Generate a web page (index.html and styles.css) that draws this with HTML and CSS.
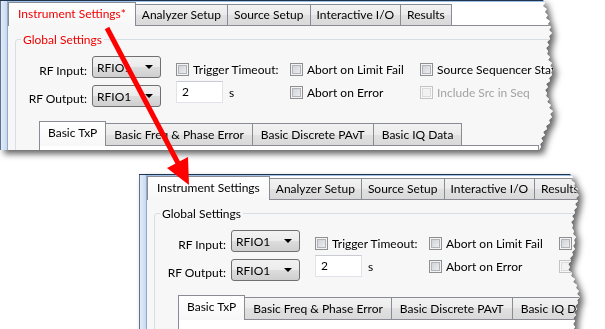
FILE: index.html
```html
<!DOCTYPE html>
<html lang="en">
<head>
    <meta charset="UTF-8">
    <meta name="viewport" content="width=device-width, initial-scale=1.0">
    <title>Instrument Settings</title>
    <link rel="stylesheet" href="styles.css">
</head>
<body>
    <!-- first capture: unsaved settings (red) -->
    <div class="shot shot-top">
        <div class="window edited">
            <div class="frame"></div>
            <div class="main">
                <div class="tabs tabs-outer">
                    <div class="tab active">Instrument Settings*</div>
                    <div class="tab">Analyzer Setup</div>
                    <div class="tab">Source Setup</div>
                    <div class="tab">Interactive I/O</div>
                    <div class="tab">Results</div>
                </div>
                <div class="page">
                    <fieldset class="group">
                        <legend>Global Settings</legend>
                        <div class="settings">
                            <span class="field-label">RF Input:</span>
                            <div class="combo"><span>RFIO1</span><i class="caret"></i></div>
                            <div class="option first"><span class="check"></span>Trigger Timeout:</div>
                            <div class="option first"><span class="check"></span>Abort on Limit Fail</div>
                            <div class="option first"><span class="check"></span>Source Sequencer State</div>

                            <span class="field-label second">RF Output:</span>
                            <div class="combo"><span>RFIO1</span><i class="caret"></i></div>
                            <div class="timeout"><span class="textbox">2</span>s</div>
                            <div class="option second"><span class="check"></span>Abort on Error</div>
                            <div class="option second disabled"><span class="check"></span>Include Src in Seq</div>
                        </div>
                        <div class="subtabs">
                            <div class="tabs tabs-inner">
                                <div class="tab active">Basic TxP</div>
                                <div class="tab">Basic Freq &amp; Phase Error</div>
                                <div class="tab">Basic Discrete PAvT</div>
                                <div class="tab">Basic IQ Data</div>
                            </div>
                            <div class="subpage"></div>
                        </div>
                    </fieldset>
                </div>
            </div>
        </div>
    </div>

    <!-- second capture: after saving -->
    <div class="shot shot-bottom">
        <div class="window">
            <div class="frame"></div>
            <div class="main">
                <div class="tabs tabs-outer">
                    <div class="tab active">Instrument Settings</div>
                    <div class="tab">Analyzer Setup</div>
                    <div class="tab">Source Setup</div>
                    <div class="tab">Interactive I/O</div>
                    <div class="tab">Results</div>
                </div>
                <div class="page">
                    <fieldset class="group">
                        <legend>Global Settings</legend>
                        <div class="settings">
                            <span class="field-label">RF Input:</span>
                            <div class="combo"><span>RFIO1</span><i class="caret"></i></div>
                            <div class="option first"><span class="check"></span>Trigger Timeout:</div>
                            <div class="option first"><span class="check"></span>Abort on Limit Fail</div>
                            <div class="option first"><span class="check"></span>Source Sequencer State</div>

                            <span class="field-label second">RF Output:</span>
                            <div class="combo"><span>RFIO1</span><i class="caret"></i></div>
                            <div class="timeout"><span class="textbox">2</span>s</div>
                            <div class="option second"><span class="check"></span>Abort on Error</div>
                            <div class="option second disabled"><span class="check"></span>Include Src in Seq</div>
                        </div>
                        <div class="subtabs">
                            <div class="tabs tabs-inner">
                                <div class="tab active">Basic TxP</div>
                                <div class="tab">Basic Freq &amp; Phase Error</div>
                                <div class="tab">Basic Discrete PAvT</div>
                                <div class="tab">Basic IQ Data</div>
                            </div>
                            <div class="subpage"></div>
                        </div>
                    </fieldset>
                </div>
            </div>
        </div>
    </div>

    <svg class="arrow" width="605" height="329" viewBox="0 0 605 329">
        <line x1="107" y1="28" x2="179" y2="165" stroke="#f00" stroke-width="5"/>
        <polygon points="189,185 167,168 188,157" fill="#f00"/>
    </svg>
</body>
</html>
```

FILE: styles.css
```css
body {
    margin: 0;
    width: 605px;
    height: 329px;
    position: relative;
    overflow: hidden;
    background: #fff;
    font-family: Lato, "Segoe UI", sans-serif;
    font-size: 12px;
    color: #000;
}

/* torn screenshot snippets */
.shot {
    position: absolute;
    filter: drop-shadow(4px 4px 3px rgba(0, 0, 0, 0.6));
}

.shot-top {
    left: 0;
    top: 0;
}

.shot-bottom {
    left: 139px;
    top: 174px;
}

.window {
    display: flex;
    background: #fff;
    border-top: 1px solid #22344c;
    overflow: hidden;
}

.shot-top .window {
    width: 560px;
    height: 150px;
    clip-path: polygon(0 0, 543px 0, 545px 3px, 543px 6px, 547px 9px, 545px 12px, 548px 15px, 546px 18px, 550px 21px, 548px 24px, 551px 27px, 549px 30px, 552px 33px, 549px 36px, 550px 39px, 547px 42px, 549px 45px, 546px 48px, 548px 51px, 547px 54px, 550px 57px, 548px 60px, 552px 63px, 550px 66px, 554px 69px, 551px 72px, 552px 75px, 549px 78px, 550px 81px, 546px 84px, 548px 87px, 545px 90px, 547px 93px, 546px 96px, 549px 99px, 547px 102px, 551px 105px, 549px 108px, 553px 111px, 550px 114px, 552px 117px, 549px 120px, 550px 123px, 546px 126px, 547px 129px, 543px 132px, 545px 135px, 541px 138px, 543px 141px, 540px 144px, 541px 147px, 539px 150px, 0 150px);
}

.shot-bottom .window {
    width: 445px;
    height: 160px;
    clip-path: polygon(0 0, 431px 0, 434px 3px, 432px 6px, 436px 9px, 435px 12px, 439px 15px, 437px 18px, 440px 21px, 437px 24px, 439px 27px, 436px 30px, 438px 33px, 435px 36px, 436px 39px, 433px 42px, 435px 45px, 432px 48px, 434px 51px, 433px 54px, 435px 57px, 434px 60px, 437px 63px, 435px 66px, 436px 69px, 434px 72px, 436px 75px, 433px 78px, 434px 81px, 431px 84px, 432px 87px, 429px 90px, 431px 93px, 429px 96px, 433px 99px, 432px 102px, 436px 105px, 434px 108px, 438px 111px, 437px 114px, 440px 117px, 438px 120px, 441px 123px, 438px 126px, 439px 129px, 436px 132px, 438px 135px, 435px 138px, 437px 141px, 434px 144px, 436px 147px, 434px 150px, 436px 153px, 434px 156px, 436px 160px, 0 160px);
}

.frame {
    flex: none;
    width: 6px;
    border-left: 1px solid #5d7190;
    border-right: 1px solid #8eabcf;
    background: linear-gradient(to right, #e3ecf7, #c8d9ee);
}

.main {
    flex: 1;
    min-width: 0;
    display: flex;
    flex-direction: column;
    border-top: 1px solid #9cc0e8;
}

/* tab strips */
.tabs {
    display: flex;
    align-items: flex-end;
    height: 24px;
    border-bottom: 1px solid #898c95;
    white-space: nowrap;
}

.tab {
    height: 20px;
    line-height: 19px;
    padding: 0 6px;
    border: 1px solid #898c95;
    border-bottom: 0;
    margin-right: -1px;
    background: linear-gradient(#f2f2f2, #ebebeb 50%, #e1e1e1 50%, #d9d9d9);
}

.tab.active {
    position: relative;
    z-index: 1;
    height: 23px;
    line-height: 21px;
    margin-bottom: -1px;
    padding: 0 9px;
    background: linear-gradient(#fff, #f7f7f7);
}

.edited .tabs-outer .tab.active,
.edited legend {
    color: #f20000;
}

.page {
    flex: 1;
    padding: 0 0 0 7px;
    background: #f7f7f7;
}

.group {
    width: 640px;
    margin: 6px 0 0;
    padding: 0;
    border: 1px solid #d5dfe5;
    border-radius: 3px;
    min-width: 0;
}

.group legend {
    margin-left: 5px;
    padding: 0 2px;
}

.settings {
    display: grid;
    grid-template-columns: 76px 84px 114px 130px auto;
    grid-template-rows: 29px 22px;
    margin-top: 9px;
    white-space: nowrap;
}

.field-label {
    text-align: right;
    padding-right: 5px;
    align-self: center;
}

.field-label.second {
    margin-top: 4px;
}

.combo {
    box-sizing: border-box;
    width: 69px;
    height: 22px;
    display: flex;
    align-items: center;
    justify-content: space-between;
    padding: 0 7px 0 4px;
    border: 1px solid #707070;
    border-radius: 3px;
    background: linear-gradient(#f2f2f2, #ebebeb 50%, #dddddd 50%, #cfcfcf);
}

.caret {
    border-left: 4px solid transparent;
    border-right: 4px solid transparent;
    border-top: 4px solid #000;
}

.option {
    display: flex;
    align-items: center;
    gap: 4px;
    align-self: start;
}

.option.first {
    margin-top: 6px;
}

.option.second {
    margin-top: 0;
}

.check {
    box-sizing: border-box;
    width: 13px;
    height: 13px;
    flex: none;
    border: 1px solid #8e8f8f;
    background: linear-gradient(135deg, #c9ccd1, #f4f4f5);
    box-shadow: inset 0 0 0 1px #f4f4f4, inset 0 0 0 2px #b1b5bb;
}

.option.disabled {
    color: #a3a3a3;
}

.disabled .check {
    border-color: #c4c4c4;
    background: #f2f2f2;
    box-shadow: inset 0 0 0 1px #f8f8f8, inset 0 0 0 2px #dcdcdc;
}

.timeout {
    display: flex;
    align-items: center;
    gap: 6px;
    align-self: start;
    margin-top: -4px;
}

.textbox {
    box-sizing: border-box;
    width: 47px;
    height: 22px;
    line-height: 20px;
    padding-left: 5px;
    background: #fff;
    border: 1px solid #e2e3ea;
    border-top-color: #c9cbd2;
}

/* inner tab control */
.subtabs {
    width: 500px;
    margin: 14px 0 0 23px;
}

.tabs-inner {
    height: 24px;
}

.tabs-inner .tab {
    height: 21px;
    line-height: 21px;
    padding: 0 8px;
}

.tabs-inner .tab.active {
    height: 24px;
    line-height: 21px;
}

.subpage {
    height: 40px;
    border: 1px solid #898c95;
    border-top: 0;
    background: #fff;
}

.arrow {
    position: absolute;
    left: 0;
    top: 0;
    z-index: 5;
}
```
